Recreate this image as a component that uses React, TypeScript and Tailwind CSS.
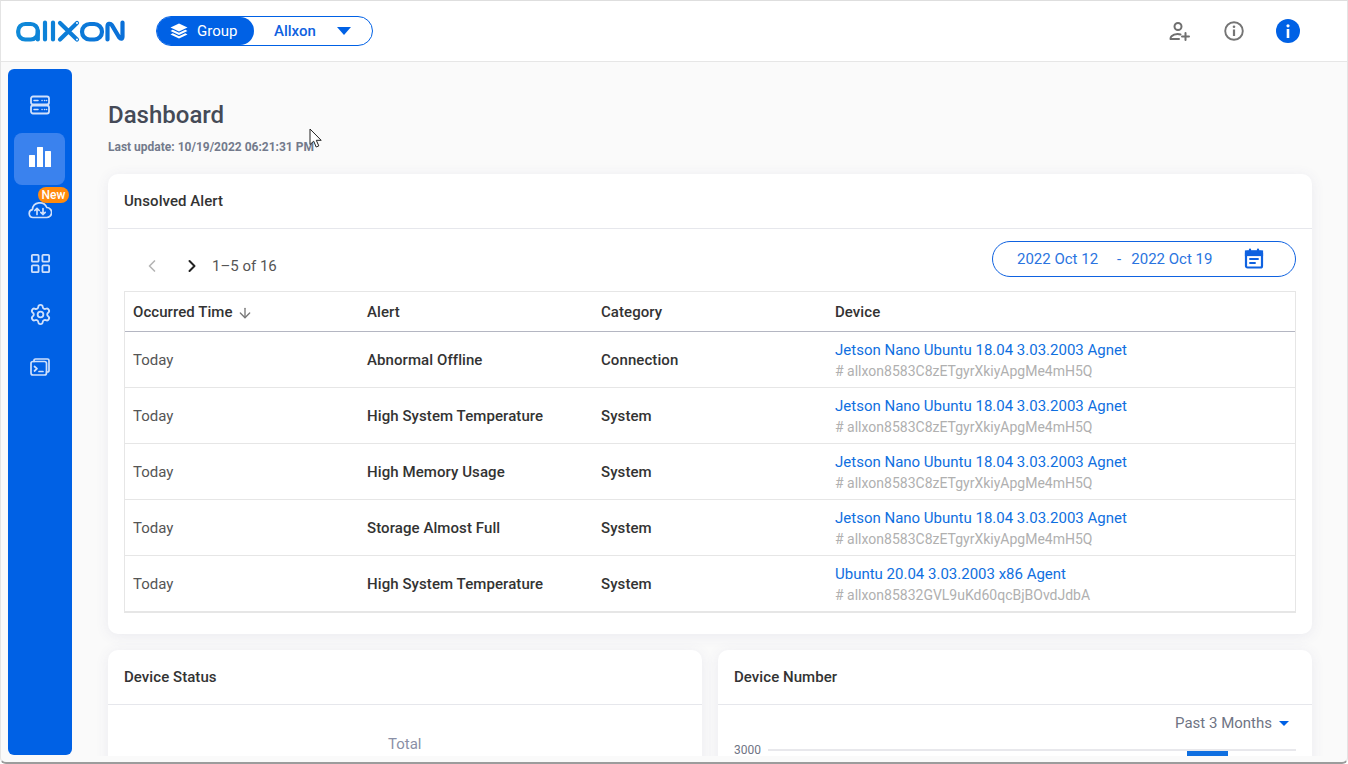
import { ArrowDown, ChevronLeft, ChevronRight, LayoutGrid, Settings } from "lucide-react";

const rows = [
  {
    alert: "Abnormal Offline",
    category: "Connection",
    device: "Jetson Nano Ubuntu 18.04 3.03.2003 Agnet",
    id: "# allxon8583C8zETgyrXkiyApgMe4mH5Q",
  },
  {
    alert: "High System Temperature",
    category: "System",
    device: "Jetson Nano Ubuntu 18.04 3.03.2003 Agnet",
    id: "# allxon8583C8zETgyrXkiyApgMe4mH5Q",
  },
  {
    alert: "High Memory Usage",
    category: "System",
    device: "Jetson Nano Ubuntu 18.04 3.03.2003 Agnet",
    id: "# allxon8583C8zETgyrXkiyApgMe4mH5Q",
  },
  {
    alert: "Storage Almost Full",
    category: "System",
    device: "Jetson Nano Ubuntu 18.04 3.03.2003 Agnet",
    id: "# allxon8583C8zETgyrXkiyApgMe4mH5Q",
  },
  {
    alert: "High System Temperature",
    category: "System",
    device: "Ubuntu 20.04 3.03.2003 x86 Agent",
    id: "# allxon85832GVL9uKd60qcBjBOvdJdbA",
  },
];

function Logo() {
  return (
    <svg width="110" height="24" viewBox="0 0 110 24" fill="none" strokeWidth="4.2" strokeLinecap="round">
      <defs>
        <linearGradient id="logo" x1="0" y1="0" x2="110" y2="0" gradientUnits="userSpaceOnUse">
          <stop offset="0" stopColor="#0f8ad8" />
          <stop offset="1" stopColor="#0a6fd8" />
        </linearGradient>
      </defs>
      <g stroke="url(#logo)">
        <rect x="3.200" y="5" width="19.600" height="15.500" rx="7" />
        <path d="M22.800 12v8.500" />
        <path d="M30 3.500v17M38 3.500v17" />
        <path d="M45 4l17 16.500M62 4 45 20.500" />
        <rect x="67" y="5" width="20" height="15.500" rx="7.700" />
        <path d="M92.500 20.500V7.500c0-3 2.800-3.500 4.300-1.500l7.500 12.500c1.500 2 3.200 1.500 3.200-1V3.500" />
      </g>
      <circle cx="62" cy="4" r="1" fill="white" />
      <circle cx="62" cy="20.500" r="1" fill="white" />
    </svg>
  );
}

function LayersIcon() {
  return (
    <svg width="18" height="16" viewBox="0 0 18 16" fill="white">
      <path d="M9 0.500 17.500 4.500 9 8.500 0.500 4.500z" />
      <path d="M2.700 6.800 0.500 8 9 12 17.500 8 15.300 6.800 9 9.800z" />
      <path d="M2.700 10.300 0.500 11.500 9 15.500 17.500 11.500 15.300 10.300 9 13.300z" />
    </svg>
  );
}

function ServerIcon() {
  return (
    <svg width="20" height="20" viewBox="0 0 20 20" fill="none" stroke="#cfe0fb" strokeWidth="1.800" strokeLinecap="round">
      <rect x="1" y="1.500" width="18" height="8" rx="2" />
      <rect x="1" y="10.500" width="18" height="8" rx="2" />
      <path d="M4 5.500h4M4 14.500h4M12 5.500h.1M14.500 5.500h.1M16.500 5.500h.1M12 14.500h.1M14.500 14.500h.1M16.500 14.500h.1" strokeWidth="1.500" />
    </svg>
  );
}

function BarsIcon() {
  return (
    <svg width="22" height="22" viewBox="0 0 22 22" fill="white">
      <rect x="0" y="9" width="6" height="12" rx="0.500" />
      <rect x="8" y="1" width="6" height="20" rx="0.500" />
      <rect x="16" y="5" width="6" height="16" rx="0.500" />
    </svg>
  );
}

function CloudIcon() {
  return (
    <svg width="24" height="18" viewBox="0 0 24 18" fill="none" stroke="#cfe0fb" strokeWidth="1.700" strokeLinecap="round" strokeLinejoin="round">
      <path d="M6 16.500H5a4 4 0 0 1-.6-7.900A7.500 7.500 0 0 1 18.800 6.500 5 5 0 0 1 18.500 16.500H6z" />
      <path d="M9 13.500v-6M6.800 9.500 9 7.300l2.200 2.200M15 7.500v6M12.800 11.300l2.200 2.200 2.200-2.200" />
    </svg>
  );
}

function ConsoleIcon() {
  return (
    <svg width="20" height="18" viewBox="0 0 20 18" fill="none" stroke="#cfe0fb" strokeWidth="1.700" strokeLinecap="round" strokeLinejoin="round">
      <rect x="1" y="3.500" width="15.500" height="13.500" rx="2" />
      <path d="M4 3.500V2.500a1.500 1.500 0 0 1 1.500-1.500h12A1.500 1.500 0 0 1 19 2.500v10a1.500 1.500 0 0 1-1.500 1.500h-1" />
      <path d="M4.500 8.500 7 10.700l-2.500 2.300M9 13.500h4" />
    </svg>
  );
}

function AddUserIcon() {
  return (
    <svg width="22" height="20" viewBox="0 0 22 20" fill="none" stroke="#6f6f6f" strokeWidth="2" strokeLinecap="round">
      <circle cx="9" cy="5.500" r="3.500" />
      <path d="M1.500 18c0-1 .2-2 1-2.700 1.500-1.500 3.500-2.300 6-2.300 1 0 2 .1 3 .5M1.500 18h8.500M13 15.500h7M16.500 12v7" />
    </svg>
  );
}

function InfoOutlineIcon() {
  return (
    <svg width="20" height="20" viewBox="0 0 20 20" fill="none" stroke="#757575" strokeWidth="1.900">
      <circle cx="10" cy="10" r="8.800" />
      <path d="M10 8.500v6.500" strokeWidth="2.200" />
      <circle cx="10" cy="5.800" r="1.300" fill="#757575" stroke="none" />
    </svg>
  );
}

function InfoSolidIcon() {
  return (
    <svg width="24" height="24" viewBox="0 0 24 24">
      <circle cx="12" cy="12" r="12" fill="#0061e5" />
      <rect x="10.700" y="10" width="2.600" height="9" fill="white" />
      <circle cx="12" cy="6.800" r="1.600" fill="white" />
    </svg>
  );
}

function CalendarIcon() {
  return (
    <svg width="20" height="21" viewBox="0 0 20 21" fill="none" stroke="#0f62e0" strokeWidth="2.200" strokeLinecap="round">
      <rect x="2" y="3.500" width="16" height="16" rx="1.500" />
      <rect x="2" y="3.500" width="16" height="3.500" fill="#0f62e0" />
      <path d="M6 1.500v2.500M14 1.500v2.500" />
      <path d="M6 11h8M6 15h5" strokeWidth="1.900" />
    </svg>
  );
}

function CursorIcon() {
  return (
    <svg width="13" height="21" viewBox="0 0 13 21">
      <path d="M1 1v15.500l3.700-3.300 2.500 5.800 2.600-1.100-2.500-5.600h4.900z" fill="white" stroke="#222" strokeWidth="1" strokeLinejoin="round" />
    </svg>
  );
}

function Card({ title, className, children }: { title: string; className?: string; children: React.ReactNode }) {
  return (
    <section className={`rounded-[10px] bg-white shadow-[0_2px_14px_rgba(80,80,130,0.09)] ${className ?? ""}`}>
      <h2 className="flex h-[55px] items-center border-b border-[#e6e7ec] px-4 text-[15px] font-medium tracking-[0.06px] text-[#333]">
        {title}
      </h2>
      {children}
    </section>
  );
}

export default function App() {
  return (
    <div className="relative flex h-[764px] w-[1348px] flex-col overflow-hidden rounded-b-md border-x border-t border-b-2 border-x-[#e4e4e4] border-t-[#dedede] border-b-[#9c9c9c] bg-[#fafafa] font-['Roboto',sans-serif]">
      {/* Header */}
      <header className="flex h-[61px] shrink-0 items-center border-b border-[#e6e6e6] bg-white pl-[14px]">
        <Logo />
        <div className="ml-[31px] flex h-[30px] w-[217px] items-center rounded-full border border-[#0061e5]">
          <div className="flex h-full w-[97px] items-center gap-[9px] rounded-full bg-[#0061e5] pl-[13px] text-[15px] text-white">
            <LayersIcon />
            Group
          </div>
          <span className="ml-[20px] text-[15px] font-medium text-[#0f62e0]">Allxon</span>
          <span className="ml-[21px] h-0 w-0 border-x-[7px] border-t-[8px] border-x-transparent border-t-[#0061e5]" />
        </div>
        <div className="ml-auto flex items-center pr-[47px]">
          <AddUserIcon />
          <div className="ml-[33px]">
            <InfoOutlineIcon />
          </div>
          <div className="ml-[32px]">
            <InfoSolidIcon />
          </div>
        </div>
      </header>

      <div className="flex min-h-0 flex-1">
        {/* Sidebar */}
        <div className="ml-[7px] mt-[7px] h-[686px] w-[64px] shrink-0 rounded-md bg-[#0061e5] px-[6px] pt-[10px]">
          <div className="flex h-[52.4px] items-center justify-center">
            <ServerIcon />
          </div>
          <div className="mb-[-1.100px] mt-[1.500px] flex h-[52px] w-[51px] items-center justify-center rounded-lg bg-[#3a82ee] pb-[4px]">
            <BarsIcon />
          </div>
          <div className="relative flex h-[52.4px] items-center justify-center">
            <CloudIcon />
            <span className="absolute left-[24px] top-[3px] flex h-[16px] w-[31px] items-center justify-center rounded-full bg-[#ff8a0d] text-xs font-medium text-white">
              New
            </span>
          </div>
          <div className="flex h-[52px] items-center justify-center pt-[3px]">
            <LayoutGrid size={23} strokeWidth={1.9} color="#cfe0fb" />
          </div>
          <div className="flex h-[52.4px] items-center justify-center">
            <Settings size={23} strokeWidth={1.9} color="#cfe0fb" />
          </div>
          <div className="flex h-[52.4px] items-center justify-center">
            <ConsoleIcon />
          </div>
        </div>

        {/* Main */}
        <main className="h-[694px] min-w-0 flex-1 overflow-hidden pl-[36px] pr-[35px] pt-[38px]">
          <h1 className="text-2xl leading-[30px] font-medium text-[#454a57]">Dashboard</h1>
          <p className="mt-[9px] text-xs leading-[16px] font-bold text-[#737a8c]">Last update: 10/19/2022 06:21:31 PM</p>

          <Card title="Unsolved Alert" className="mt-[19px]">
            <div className="px-4 pb-[21px]">
              <div className="flex h-[62px] items-center pl-[18px] pt-[12px]">
                <ChevronLeft size={20} color="#b5b5b5" className="mr-[20px]" />
                <ChevronRight size={20} color="#222" strokeWidth={2.4} className="mr-[10px]" />
                <span className="text-[15px] text-[#555]">1–5 of 16</span>
                <div className="-mt-[15px] ml-auto flex h-[36px] w-[304px] items-center rounded-full border border-[#0f62e0] pl-[24px] text-[15px] text-[#2a74e0]">
                  <span className="flex pt-[2px]">
                    2022 Oct 12
                    <span className="ml-[19px]">-</span>
                    <span className="ml-[10px]">2022 Oct 19</span>
                  </span>
                  <span className="ml-[32px]">
                    <CalendarIcon />
                  </span>
                </div>
              </div>
              <div className="border border-b-2 border-[#e6e6e6]">
                <div className="grid h-[40px] grid-cols-[234px_234px_234px_1fr] items-center border-b border-[#b4b6c2] pt-[2px] text-[15px] font-medium tracking-[0.06px] text-[#333]">
                  <div className="flex items-center gap-[4px] pl-2">
                    Occurred Time <ArrowDown size={16} color="#777" />
                  </div>
                  <div className="pl-2">Alert</div>
                  <div className="pl-2">Category</div>
                  <div className="pl-2">Device</div>
                </div>
                {rows.map((row, i) => (
                  <div
                    key={i}
                    className={`grid grid-cols-[234px_234px_234px_1fr] items-center text-[15px] ${i < rows.length - 1 ? "h-[56px] border-b border-[#e6e6e6]" : "h-[55px]"}`}
                  >
                    <div className="pl-2 pt-[2px] text-[#555]">Today</div>
                    <div className="pl-2 pt-[2px] font-medium tracking-[0.08px] text-[#333]">{row.alert}</div>
                    <div className="pl-2 pt-[2px] font-medium tracking-[0.08px] text-[#333]">{row.category}</div>
                    <div className="pl-2 pt-[2px]">
                      <div className="leading-[21px] text-[#0f6fe0]">{row.device}</div>
                      <div className="text-sm leading-[21px] text-[#b0b0b0]">{row.id}</div>
                    </div>
                  </div>
                ))}
              </div>
            </div>
          </Card>

          <div className="mt-4 grid grid-cols-2 gap-4">
            <Card title="Device Status" className="h-[300px]">
              <p className="mt-[29px] pl-[280px] text-[15px] leading-[20px] text-[#8a90a6]">Total</p>
            </Card>
            <Card title="Device Number" className="h-[300px]">
              <div className="flex h-[36px] items-center justify-end gap-[7px] pr-[23px] text-[15px] text-[#6f7484]">
                Past 3 Months
                <span className="h-0 w-0 border-x-[5px] border-t-[5px] border-x-transparent border-t-[#0061e5]" />
              </div>
              <div className="flex items-start pl-[16px] pr-4 pt-[2px]">
                <span className="w-[34px] text-xs leading-[14px] text-[#6f7484]">3000</span>
                <div className="mt-[6px] flex-1 border-t-2 border-[#e8e8ec] pl-[419px]">
                  <div className="h-[20px] w-[41px] bg-[#0f6fe0]" />
                </div>
              </div>
            </Card>
          </div>
        </main>
      </div>

      {/* Mouse pointer captured in the shot */}
      <div className="absolute left-[308px] top-[127px]">
        <CursorIcon />
      </div>
    </div>
  );
}
